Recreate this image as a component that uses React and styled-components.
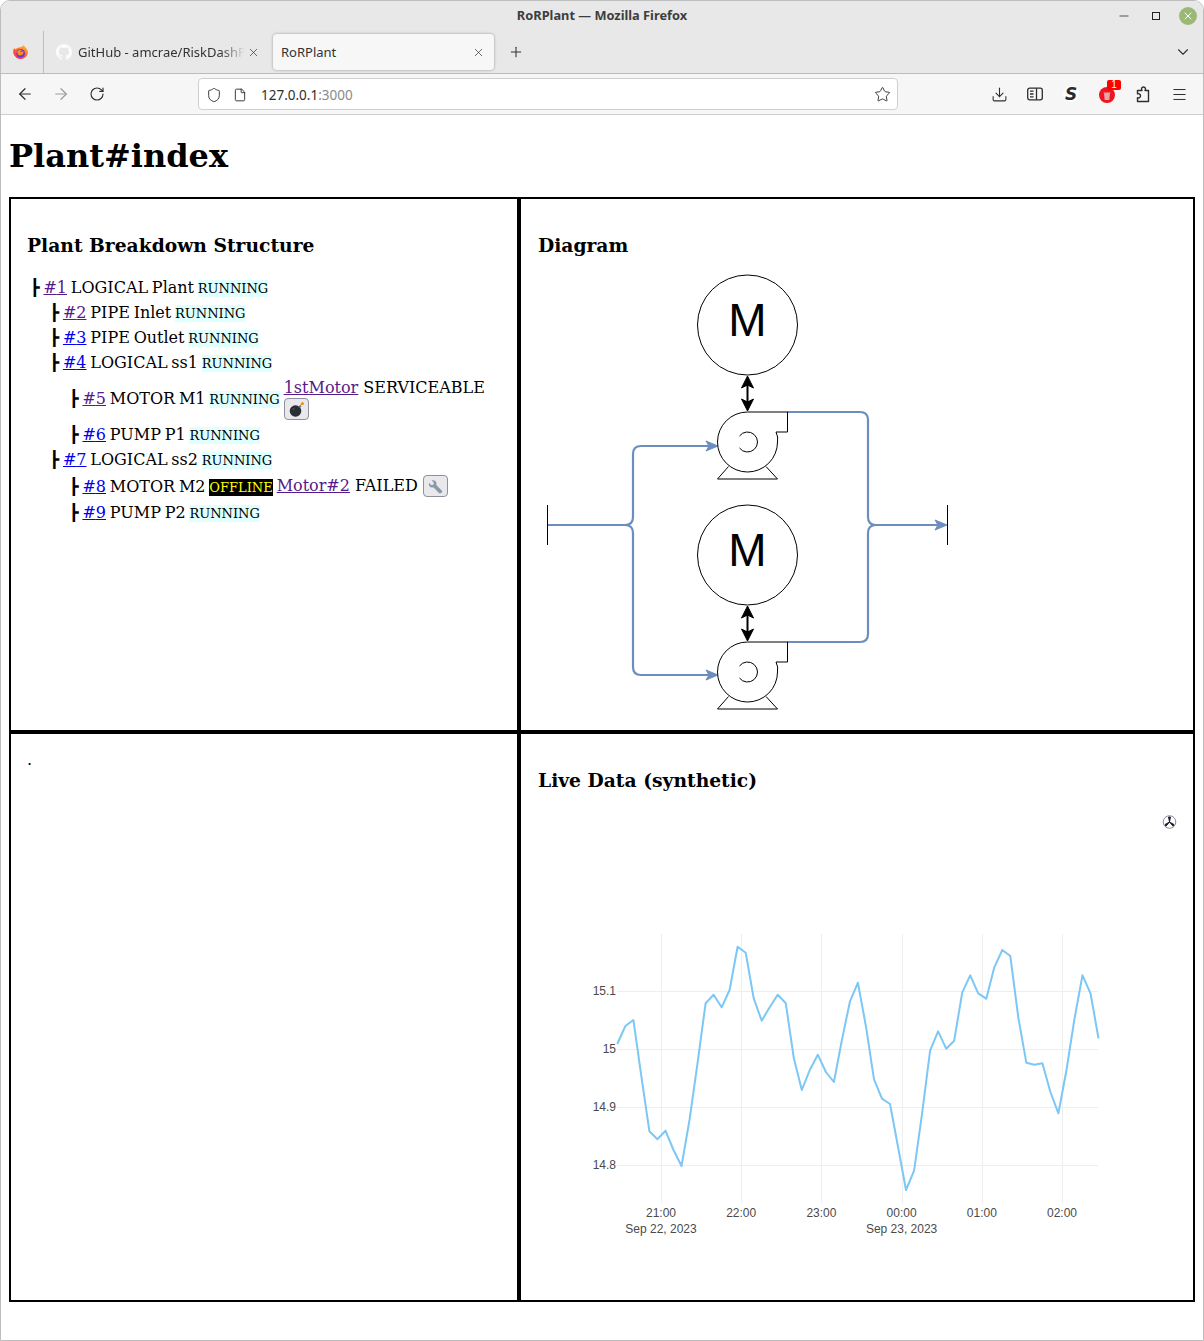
import React from "react";
import styled, { createGlobalStyle } from "styled-components";
import {
  ArrowLeft, ArrowRight, RotateCw, Shield, File, Star, Download, Menu, X, Plus, Minus, ChevronDown,
} from "lucide-react";

const Global = createGlobalStyle`
  html, body { margin: 0; padding: 0; background: #fff; }
  * { box-sizing: border-box; }
`;

const Win = styled.div`
  width: 1204px;
  height: 1341px;
  display: flex;
  flex-direction: column;
  border: 1px solid #bdbdbd;
  border-radius: 10px 10px 0 0;
  overflow: hidden;
  background: #fff;
`;
const TitleBar = styled.div`
  height: 29px;
  flex: none;
  background: #e8e8e8;
  display: flex;
  align-items: center;
  justify-content: flex-end;
  position: relative;
  padding-right: 6px;
  gap: 15px;
  color: #222;
`;
const Title = styled.div`
  position: absolute;
  left: 0;
  right: 0;
  padding-bottom: 2px;
  text-align: center;
  font: 700 12.8px "Noto Sans", sans-serif;
  color: #3d3d3d;
`;
const WinBtn = styled.span`
  width: 17px;
  height: 18px;
  display: flex;
  align-items: center;
  justify-content: center;
`;
const MaxBox = styled.span`
  width: 8px;
  height: 8px;
  border: 1px solid #222;
`;
const CloseBtn = styled.span`
  width: 18px;
  height: 18px;
  border-radius: 50%;
  background: #9ab974;
  color: #fff;
  display: flex;
  align-items: center;
  justify-content: center;
`;
const TabBar = styled.div`
  height: 44px;
  flex: none;
  background: #e8e8e8;
  border-bottom: 1px solid #bcbcbc;
  display: flex;
  align-items: center;
  font: 400 13px "Noto Sans", sans-serif;
  color: #333;
`;
const LogoSlot = styled.div`
  width: 43px;
  height: 43px;
  border-right: 1px solid #bdbdbd;
  display: flex;
  align-items: center;
  justify-content: center;
  padding-right: 3px;
  margin-top: 1px;
`;
const Tab = styled.div`
  width: ${(p) => p.$w}px;
  height: 36px;
  margin-left: ${(p) => p.$ml}px;
  margin-top: 1px;
  display: flex;
  align-items: center;
  padding: 0 ${(p) => p.$pr}px 0 8px;
  gap: 2px;
  border-radius: 4px;
  background: ${(p) => (p.$active ? "#f7f7f7" : "transparent")};
  box-shadow: ${(p) => (p.$active ? "0 0 3px rgba(0,0,0,.35)" : "none")};
`;
const Favicon = styled.span`
  display: flex;
  margin-right: 4px;
`;
const TabLabel = styled.span`
  flex: 1;
  min-width: 0;
  white-space: nowrap;
  overflow: hidden;
  -webkit-mask-image: ${(p) => (p.$fade ? "linear-gradient(to right, #000 85%, transparent)" : "none")};
  mask-image: ${(p) => (p.$fade ? "linear-gradient(to right, #000 85%, transparent)" : "none")};
`;
const PlusBtn = styled.span`
  display: flex;
  margin-left: 14px;
  margin-top: 1px;
`;
const Chevron = styled.span`
  display: flex;
  margin-left: auto;
  margin-right: 11px;
  margin-top: 1px;
`;
const Toolbar = styled.div`
  height: 41px;
  flex: none;
  background: #f6f6f6;
  border-bottom: 1px solid #cfcfcf;
  display: flex;
  align-items: center;
  color: #2e2e2e;
  padding-left: 14px;
`;
const NavBtn = styled.span`
  width: 20px;
  display: flex;
  justify-content: center;
  margin-right: 16px;
  color: ${(p) => (p.$off ? "#9c9c9c" : "#2e2e2e")};
`;
const UrlBar = styled.div`
  width: 700px;
  height: 32px;
  margin-left: 75px;
  margin-right: 91px;
  background: #fff;
  border: 1px solid #cfcfcf;
  border-radius: 4px;
  display: flex;
  align-items: center;
  padding: 1px 6px 0 7px;
  font: 400 13.5px "Noto Sans", sans-serif;
`;
const UrlIcon = styled.span`
  display: flex;
  margin-right: ${(p) => p.$mr}px;
`;
const Host = styled.span`
  color: #2e2e2e;
  flex: 1;
`;
const Port = styled.span`
  color: #8a8a8a;
`;
const ToolIcons = styled.div`
  display: flex;
  align-items: center;
  gap: 16px;
`;
const ToolIcon = styled.span`
  width: 20px;
  height: 20px;
  display: flex;
  align-items: center;
  justify-content: center;
  position: relative;
`;
const SBadge = styled.span`
  width: 16px;
  height: 16px;
  border-radius: 50%;
  background: #fff;
  color: #2b2a33;
  display: flex;
  align-items: center;
  justify-content: center;
  font: italic 900 17px "DejaVu Sans", sans-serif;
`;
const RedDot = styled.span`
  width: 16px;
  height: 16px;
  border-radius: 50%;
  background: #f0141e;
  margin-top: 2px;
  display: flex;
  align-items: center;
  justify-content: center;
`;
const Count = styled.span`
  position: absolute;
  top: -4px;
  right: -4px;
  width: 14px;
  height: 10px;
  border-radius: 2px;
  background: #f00;
  color: #fff;
  font: 400 10px/10px "Liberation Sans", sans-serif;
  text-align: center;
`;

const Page = styled.main`
  flex: 1;
  padding: 0 8px;
  font: 400 16px "DejaVu Serif", serif;
  color: #000;
`;
const H1 = styled.h1`
  font: 700 32px/38px "DejaVu Serif", serif;
  margin: 22px 0 22px;
`;
const Board = styled.div`
  display: grid;
  grid-template-columns: 510px 676px;
  grid-template-rows: 535px 570px;
`;
const Cell = styled.section`
  border: 2px solid #000;
  padding: 16px;
  padding-left: ${(p) => p.$pl || 16}px;
  overflow: hidden;
`;
const H3 = styled.h3`
  font: 700 18.72px/22px "DejaVu Serif", serif;
  margin: 19px 0;
`;
const Row = styled.div`
  display: flex;
  align-items: center;
  padding-left: ${(p) => 3 + p.$level * 19.5}px;
  min-height: ${(p) => p.$minH}px;
`;
const Lead = styled.span`
  flex: none;
  line-height: 25px;
  white-space: nowrap;
  word-spacing: -1.3px;
`;
const Link = styled.a`
  color: ${(p) => (p.$visited ? "#551a8b" : "#0000ee")};
  text-decoration: underline;
`;
const Status = styled.span`
  font-size: 13px;
  line-height: 1;
  padding: 1px 0;
  background: ${(p) => (p.$off ? "#000" : "#e0ffff")};
  color: ${(p) => (p.$off ? "#ffff00" : "#000")};
`;
const Detail = styled.span`
  display: block;
  flex: 0 1 auto;
  min-width: 0;
  margin-left: 4px;
  padding: 2px 0;
  line-height: 21px;
`;
const IconButton = styled.button`
  width: 25px;
  height: 22px;
  padding: 0;
  margin: 0;
  vertical-align: top;
  background: #e9e9ed;
  border: 1px solid #8f8f9d;
  border-radius: 4px;
  display: inline-flex;
  align-items: center;
  justify-content: center;
`;
const Dot = styled.p`
  margin: 0;
  line-height: 20px;
`;
const Drawing = styled.svg`
  display: block;
  overflow: visible;
`;

const FirefoxLogo = () => (
  <svg width="17" height="17" viewBox="0 0 16 16">
    <defs>
      <linearGradient id="ff" x1="0.8" y1="0" x2="0.2" y2="1">
        <stop offset="0" stopColor="#ffc02e" />
        <stop offset="0.5" stopColor="#ff6a2b" />
        <stop offset="1" stopColor="#f3266a" />
      </linearGradient>
    </defs>
    <path d="M11 .8c.5 1.300 1.100 1.800 2 2.800 1.400 1.500 2 3 2 4.600A7 7 0 1 1 1.400 5c.3-.6.7-1.100 1-1.200 0 .7.2 1.200.6 1.400C4 4 5.500 3.600 7 3.300 9 3 10.700 2.400 11 .8z" fill="url(#ff)" />
    <circle cx="8.200" cy="8.600" r="4" fill="#6a3bc9" />
    <path d="M5 7c1-1.600 3-2 4.600-1.200-1 .1-1.700.7-1.800 1.400 1 .3 2.200.1 2.900-.3.6 2-1 4-3 3.900C5.800 10.700 4.800 8.900 5 7z" fill="#ff8a2b" />
  </svg>
);
const GithubMark = () => (
  <svg width="16" height="16" viewBox="0 0 16 16" fill="#fbfbfb">
    <path d="M8 0C3.580 0 0 3.580 0 8c0 3.540 2.290 6.530 5.470 7.590.4.070.55-.170.550-.380 0-.190-.010-.820-.010-1.490-2.010.370-2.530-.490-2.690-.940-.090-.230-.480-.940-.820-1.130-.280-.150-.680-.520-.010-.530.630-.010 1.080.580 1.230.820.720 1.210 1.870.870 2.330.660.070-.520.280-.870.510-1.070-1.780-.200-3.640-.890-3.640-3.950 0-.870.310-1.590.820-2.150-.080-.200-.360-1.020.080-2.120 0 0 .670-.210 2.200.820.640-.180 1.320-.270 2-.270s1.360.090 2 .270c1.530-1.040 2.200-.820 2.200-.820.440 1.100.160 1.920.080 2.120.510.560.820 1.270.820 2.150 0 3.070-1.870 3.750-3.650 3.950.290.250.540.730.540 1.480 0 1.070-.010 1.930-.010 2.200 0 .210.150.460.550.380A8.010 8.010 0 0 0 16 8c0-4.420-3.580-8-8-8z" />
  </svg>
);
const SidebarIcon = () => (
  <svg width="16" height="14" viewBox="0 0 16 14" fill="none" stroke="#2e2e2e" strokeWidth="1.300">
    <rect x=".7" y="1.200" width="14.600" height="11.600" rx="2" />
    <path d="M9.500 1.200v11.600M3 4.200h3.500M3 7h3.500M3 9.800h3.500" />
  </svg>
);
const PuzzleIcon = () => (
  <svg width="16" height="17" viewBox="0 0 16 17" fill="none" stroke="#2e2e2e" strokeWidth="1.400" strokeLinejoin="round">
    <path d="M4 4.500H7C6 3 6.500 1 8.500 1S11 3 10 4.500H13.500V15.500H2.500V11.800C4.500 12.300 5.500 11.200 5.500 9.800S4.500 7.300 2.500 7.800V4.500Z" />
  </svg>
);
const BinGlyph = () => (
  <svg width="8" height="9" viewBox="0 0 8 9" fill="#e3a6ad">
    <path d="M1 2h6l-.7 7H1.700zM.5 1h7v.6h-7z" />
  </svg>
);
const Bomb = () => (
  <svg width="17" height="17" viewBox="0 0 17 17">
    <circle cx="7.500" cy="10" r="5.800" fill="#292f33" />
    <path d="M10.500 5.500l1.500-1.500 1.500 1.500-1.500 1.500z" fill="#66757f" />
    <path d="M12.500 4.500c.5-1 1-1.500 2-1.800" stroke="#a0632d" strokeWidth="1" fill="none" />
    <circle cx="14.500" cy="2.500" r="1.500" fill="#f4900c" />
    <circle cx="5.500" cy="8" r="1" fill="#4a5358" />
  </svg>
);
const Wrench = () => (
  <svg width="17" height="17" viewBox="0 0 17 17">
    <path d="M15 14l-1 1c-.6.6-1.400.6-2 0L6.600 9.400c-1.500.5-3.100.1-4-1.100C1.800 7.300 1.700 6 2.200 4.900l2.200 2.300 2-.4.500-2-2.200-2.300c1.200-.5 2.600-.3 3.600.6 1.100 1 1.500 2.600 1 4l5.600 5.600c.6.500.6 1.300.1 1.900z" fill="#8899a6" />
  </svg>
);

const PumpMotor = ({ dy }) => (
  <g transform={`translate(0 ${dy})`}>
    <circle cx="747.500" cy="325" r="50" fill="#fff" stroke="#000" strokeWidth="1" />
    <text x="747.500" y="336" textAnchor="middle" fontFamily="Liberation Sans, sans-serif" fontSize="46" fill="#000">M</text>
    <path d="M747.500 382V406" stroke="#000" strokeWidth="2" fill="none" />
    <path d="M747.500 376l6 12-6-3-6 3zM747.500 411l6-12-6 3-6-3z" fill="#000" stroke="#000" strokeWidth="1" />
    <path d="M717.500 442A30 30 0 0 1 747.500 412H787.500V432H776Q778.500 437 777.500 442A30 30 0 0 1 717.500 442Z" fill="#fff" stroke="#000" strokeWidth="1" />
    <path d="M739.500 436A10 10 0 1 1 739.500 448" fill="none" stroke="#000" strokeWidth="1" />
    <path d="M728.500 466.500L717.500 479H777.500L766 466.500" fill="none" stroke="#000" strokeWidth="1" />
  </g>
);

const Diagram = () => (
  <Drawing width="420" height="440" viewBox="538 275 420 440">
    <g fill="none" stroke="#6c8ebf" strokeWidth="2.200">
      <path d="M548 525H625Q633 525 633 517V454Q633 446 641 446H712" />
      <path d="M548 525H625Q633 525 633 533V667Q633 675 641 675H712" />
      <path d="M787 412H860Q868 412 868 420V517Q868 525 876 525H940" />
      <path d="M787 642H860Q868 642 868 634V533Q868 525 876 525H940" />
    </g>
    <g fill="#6c8ebf" stroke="#6c8ebf">
      <path d="M718 446l-12 5 3-5-3-5z" />
      <path d="M718 675l-12 5 3-5-3-5z" />
      <path d="M947 525l-12 5 3-5-3-5z" />
    </g>
    <path d="M547.500 505V545M947.500 505V545" stroke="#000" strokeWidth="1" fill="none" />
    <PumpMotor dy={0} />
    <PumpMotor dy={230} />
  </Drawing>
);

const ys = [342,288,270,440,604,628,602,660,708,570,400,220,194,232,180,50,68,205,272,232,194,220,384,480,420,374,426,456,330,215,
  158,290,448,506,522,650,780,722,550,362,304,356,332,188,136,190,206,112,60,78,262,398,404,400,486,550,420,266,136,190,325];
const linePoints = ys.map((y, i) => `${(617.33 + i * 8.02).toFixed(1)},${(930 + y / 3).toFixed(1)}`).join(" ");
const hours = [["21:00", 661], ["22:00", 741.2], ["23:00", 821.4], ["00:00", 901.6], ["01:00", 981.8], ["02:00", 1062]];
const levels = [["15.1", 991], ["15", 1049], ["14.9", 1107], ["14.8", 1165]];

const Chart = () => (
  <Drawing width="640" height="435" viewBox="538 810 640 435" fontFamily="Liberation Sans, sans-serif" fontSize="12" fill="#4a4a4a">
    {hours.map(([, x]) => <path key={x} d={`M${Math.round(x) + 0.5} 934V1203`} stroke="#eee" strokeWidth="1" />)}
    {levels.map(([, y]) => <path key={y} d={`M617 ${y + 0.5}H1098`} stroke="#eee" strokeWidth="1" />)}
    {levels.map(([t, y]) => <text key={t} x="616" y={y + 4} textAnchor="end">{t}</text>)}
    {hours.map(([t, x]) => <text key={t} x={x} y="1217" textAnchor="middle">{t}</text>)}
    <text x="661" y="1233" textAnchor="middle">Sep 22, 2023</text>
    <text x="901.600" y="1233" textAnchor="middle">Sep 23, 2023</text>
    <polyline points={linePoints} fill="none" stroke="#7cc7f5" strokeWidth="2" strokeLinejoin="round" />
    <circle cx="1169.500" cy="822" r="6.300" fill="#fff" stroke="#8a8a9a" strokeWidth="1" />
    <path d="M1169.500 822L1168.500 817h2zM1169.500 822l4.500 2.500-1 1.700zM1169.500 822l-4.500 2.500 1 1.700z" fill="#1a1a2a" stroke="#1a1a2a" strokeWidth=".9" />
  </Drawing>
);

const Item = ({ level, n, visited, children, status = "RUNNING", off, detail, minH = 25 }) => (
  <Row $level={level} $minH={minH}>
    <Lead>
      ┣ <Link href="#" $visited={visited}>#{n}</Link> {children} <Status $off={off}>{status}</Status>
    </Lead>
    {detail}
  </Row>
);

export default function App() {
  return (
    <Win>
      <Global />
      <TitleBar>
        <Title>RoRPlant — Mozilla Firefox</Title>
        <WinBtn><Minus size={14} strokeWidth={1.3} /></WinBtn>
        <WinBtn><MaxBox /></WinBtn>
        <CloseBtn><X size={12} strokeWidth={2} /></CloseBtn>
      </TitleBar>
      <TabBar>
        <LogoSlot><FirefoxLogo /></LogoSlot>
        <Tab $w={225} $ml={4} $pr={13}>
          <Favicon><GithubMark /></Favicon>
          <TabLabel $fade>GitHub - amcrae/RiskDashPlant</TabLabel>
          <X size={13} strokeWidth={1.3} />
        </Tab>
        <Tab $w={221} $ml={0} $pr={9} $active>
          <TabLabel>RoRPlant</TabLabel>
          <X size={13} strokeWidth={1.3} />
        </Tab>
        <PlusBtn><Plus size={16} strokeWidth={1.6} /></PlusBtn>
        <Chevron><ChevronDown size={18} strokeWidth={1.5} /></Chevron>
      </TabBar>
      <Toolbar>
        <NavBtn><ArrowLeft size={18} strokeWidth={1.6} /></NavBtn>
        <NavBtn $off><ArrowRight size={18} strokeWidth={1.6} /></NavBtn>
        <NavBtn><RotateCw size={16} strokeWidth={1.7} /></NavBtn>
        <UrlBar>
          <UrlIcon $mr={11}><Shield size={16} strokeWidth={1.4} /></UrlIcon>
          <UrlIcon $mr={14}><File size={14} strokeWidth={1.6} /></UrlIcon>
          <Host>127.0.0.1<Port>:3000</Port></Host>
          <Star size={17} strokeWidth={1.3} />
        </UrlBar>
        <ToolIcons>
          <ToolIcon><Download size={17} strokeWidth={1.5} /></ToolIcon>
          <ToolIcon><SidebarIcon /></ToolIcon>
          <ToolIcon><SBadge>S</SBadge></ToolIcon>
          <ToolIcon><RedDot><BinGlyph /></RedDot><Count>1</Count></ToolIcon>
          <ToolIcon><PuzzleIcon /></ToolIcon>
          <ToolIcon><Menu size={17} strokeWidth={1.4} /></ToolIcon>
        </ToolIcons>
      </Toolbar>
      <Page>
        <H1>Plant#index</H1>
        <Board>
          <Cell>
            <H3>Plant Breakdown Structure</H3>
            <Item level={0} n={1} visited>LOGICAL Plant</Item>
            <Item level={1} n={2} visited>PIPE Inlet</Item>
            <Item level={1} n={3}>PIPE Outlet</Item>
            <Item level={1} n={4}>LOGICAL ss1</Item>
            <Item level={2} n={5} visited detail={
              <Detail>
                <Link href="#" $visited>1stMotor</Link> SERVICEABLE <IconButton><Bomb /></IconButton>
              </Detail>
            }>MOTOR M1</Item>
            <Item level={2} n={6}>PUMP P1</Item>
            <Item level={1} n={7}>LOGICAL ss2</Item>
            <Item level={2} n={8} status="OFFLINE" off minH={28} detail={
              <Detail>
                <Link href="#" $visited>Motor#2</Link> FAILED <IconButton><Wrench /></IconButton>
              </Detail>
            }>MOTOR M2</Item>
            <Item level={2} n={9}>PUMP P2</Item>
          </Cell>
          <Cell $pl={17}>
            <H3>Diagram</H3>
            <Diagram />
          </Cell>
          <Cell>
            <Dot>.</Dot>
          </Cell>
          <Cell $pl={17}>
            <H3>Live Data (synthetic)</H3>
            <Chart />
          </Cell>
        </Board>
      </Page>
    </Win>
  );
}
